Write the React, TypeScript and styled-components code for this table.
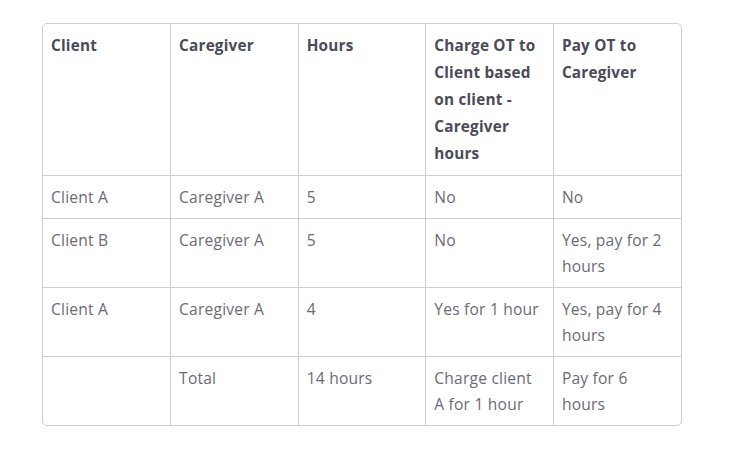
import styled, { createGlobalStyle } from 'styled-components'

/* --------------------- Style --------------------- */
const GlobalStyle = createGlobalStyle`
  body {
    margin: 0;
    background: #fff;
    font-family: 'Open Sans', 'Lato', sans-serif;
  }
`
const Page = styled.div`
  padding: 23px 0 0 42px;
`
const Frame = styled.div`
  box-sizing: border-box;
  width: 640px;
  border: 1px solid #cfcfd3;
  border-radius: 5px;
  overflow: hidden;
`
const Table = styled.table`
  width: 100%;
  border-collapse: collapse;
  table-layout: fixed;
`
const Cell = styled.td<{ $head?: boolean }>`
  vertical-align: top;
  padding: 8px 8px;
  border-right: 1px solid #cfcfd3;
  border-bottom: 1px solid #cfcfd3;
  color: ${(p) => (p.$head ? '#4b4b57' : '#6b6b76')};
  font-weight: ${(p) => (p.$head ? 700 : 400)};
  font-size: ${(p) => (p.$head ? '15.3px' : '15.6px')};
  letter-spacing: 0.2px;
  line-height: ${(p) => (p.$head ? '27px' : '26px')};
  &:last-child {
    border-right: none;
  }
  tr:last-child > & {
    border-bottom: none;
  }
`
/* ------------------------------------------------- */

const headers = [
  'Client',
  'Caregiver',
  'Hours',
  'Charge OT to Client based on client - Caregiver hours',
  'Pay OT to Caregiver',
]

const rows = [
  ['Client A', 'Caregiver A', '5', 'No', 'No'],
  ['Client B', 'Caregiver A', '5', 'No', 'Yes, pay for 2 hours'],
  ['Client A', 'Caregiver A', '4', 'Yes for 1 hour', 'Yes, pay for 4 hours'],
  ['', 'Total', '14 hours', 'Charge client A for 1 hour', 'Pay for 6 hours'],
]

const App: React.FC = () => {
  return (
    <Page>
      <GlobalStyle />
      <Frame>
        <Table>
          <tbody>
            <tr>
              {headers.map((h) => (
                <Cell key={h} $head>
                  {h}
                </Cell>
              ))}
            </tr>
            {rows.map((r, i) => (
              <tr key={i}>
                {r.map((c, j) => (
                  <Cell key={j}>{c}</Cell>
                ))}
              </tr>
            ))}
          </tbody>
        </Table>
      </Frame>
    </Page>
  )
}
export default App
